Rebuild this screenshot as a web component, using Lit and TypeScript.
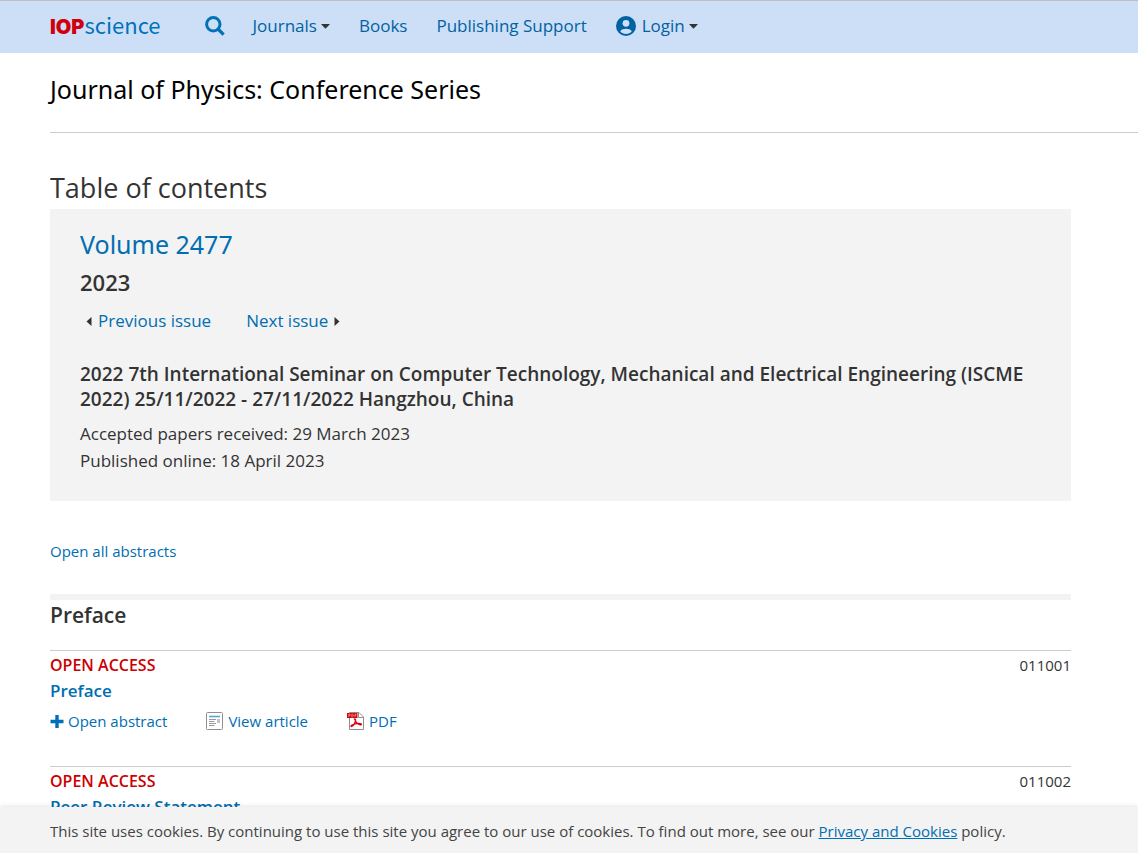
import { LitElement, html, css, svg } from "lit";
import { customElement, property } from "lit/decorators.js";

interface Article {
  title: string;
  number: string;
}

const ARTICLES: Article[] = [
  { title: "Preface", number: "011001" },
  { title: "Peer Review Statement", number: "011002" },
];

const linkStyles = css`
  a {
    color: #006eb2;
    text-decoration: none;
  }
  a:hover {
    text-decoration: underline;
  }
`;

@customElement("site-header")
export class SiteHeader extends LitElement {
  static styles = [
    linkStyles,
    css`
      :host {
        display: block;
        background: #cddff6;
        border-top: 1px solid #bfbfbf;
      }
      .bar {
        display: flex;
        align-items: center;
        height: 50px;
        padding: 0 50px 2px;
        font-size: 17px;
        line-height: 24px;
      }
      .logo {
        display: flex;
        align-items: baseline;
        margin-right: 44px;
        padding-bottom: 2px;
      }
      .logo-iop {
        color: #d0000d;
        font-family: "Inter", sans-serif;
        font-size: 20px;
        font-weight: 900;
      }
      .logo-science {
        color: #0072bc;
        font-family: "Noto Sans CJK SC", sans-serif;
        font-size: 22px;
      }
      .search {
        display: flex;
        margin-right: 28px;
      }
      .nav {
        display: flex;
        gap: 29px;
      }
      .item {
        display: flex;
        align-items: center;
        padding: 0;
        border: 0;
        background: none;
        font: inherit;
        color: #0062a3;
        white-space: nowrap;
        cursor: pointer;
      }
      a.item {
        color: #0062a3;
      }
      .caret {
        margin-left: 4px;
      }
      .user {
        margin-right: 6px;
      }
    `,
  ];

  private caret() {
    return html`<svg class="caret" width="9" height="5" viewBox="0 0 9 5" aria-hidden="true">
      <path d="M0 0h9L4.5 4.8z" fill="#333" />
    </svg>`;
  }

  render() {
    return html`
      <header class="bar">
        <a class="logo" href="#" aria-label="IOPscience home"
          ><span class="logo-iop">IOP</span><span class="logo-science">science</span></a
        >
        <a class="search" href="#" aria-label="Search">
          <svg width="20" height="20" viewBox="0 0 20 20" fill="none" stroke="#0072b5" aria-hidden="true">
            <circle cx="8.3" cy="8.3" r="6.7" stroke-width="3" />
            <path d="M13 13l5.6 5.6" stroke-width="3.2" />
          </svg>
        </a>
        <nav class="nav">
          <button class="item" type="button">Journals${this.caret()}</button>
          <a class="item" href="#">Books</a>
          <a class="item" href="#">Publishing Support</a>
          <button class="item" type="button">
            <svg class="user" width="20" height="20" viewBox="0 0 20 20" aria-hidden="true">
              <circle cx="10" cy="10" r="10" fill="#0062a3" />
              <circle cx="10" cy="7.300" r="3.400" fill="#cddff6" />
              <path d="M4.200 15.200c1.200-1.600 3.600-2.400 5.800-2.400s4.600.800 5.800 2.400c-1.300 1.700-3.400 2.700-5.800 2.700s-4.500-1-5.800-2.700z" fill="#cddff6" />
            </svg>
            Login${this.caret()}
          </button>
        </nav>
      </header>
    `;
  }
}

@customElement("issue-panel")
export class IssuePanel extends LitElement {
  static styles = [
    linkStyles,
    css`
      :host {
        display: block;
        padding: 17px 30px 27px;
        background: #f3f3f3;
      }
      h3,
      h4,
      p {
        margin: 0;
      }
      .volume {
        font-family: "Noto Sans", "Open Sans", sans-serif;
        font-size: 25px;
        font-weight: 400;
        line-height: 36px;
      }
      .year {
        margin-top: 6px;
        font-size: 22px;
        font-weight: 600;
        line-height: 28px;
      }
      .pager {
        display: flex;
        gap: 35px;
        margin-top: 12px;
        padding-left: 6px;
        font-size: 17px;
        line-height: 26px;
      }
      .pager a {
        display: flex;
        align-items: center;
        gap: 6px;
      }
      .event {
        margin: 28px 0 8px;
        font-size: 19px;
        font-weight: 600;
        line-height: 25px;
      }
      .date {
        font-size: 17px;
        line-height: 27px;
      }
    `,
  ];

  render() {
    return html`
      <h3 class="volume"><a href="#">Volume 2477</a></h3>
      <h4 class="year">2023</h4>
      <nav class="pager" aria-label="Issues">
        <a href="#">
          <svg width="6" height="9" viewBox="0 0 6 9" aria-hidden="true"><path d="M5.500 0v9L0.500 4.500z" fill="#333" /></svg>Previous issue</a
        >
        <a href="#"
          >Next issue<svg width="6" height="9" viewBox="0 0 6 9" aria-hidden="true"><path d="M0.500 0v9L5.500 4.500z" fill="#333" /></svg
        ></a>
      </nav>
      <h4 class="event">
        2022 7th International Seminar on Computer Technology, Mechanical and Electrical Engineering (ISCME 2022)
        25/11/2022 - 27/11/2022 Hangzhou, China
      </h4>
      <p class="date">Accepted papers received: 29 March 2023</p>
      <p class="date">Published online: 18 April 2023</p>
    `;
  }
}

@customElement("article-entry")
export class ArticleEntry extends LitElement {
  @property({ attribute: false }) article!: Article;

  static styles = [
    linkStyles,
    css`
      :host {
        display: block;
        padding: 1px 0 32px;
        border-top: 1px solid #ccc;
        font-size: 15px;
      }
      .top {
        display: flex;
        justify-content: space-between;
        line-height: 26px;
      }
      .access {
        color: #c00;
        font-size: 16px;
        font-weight: 600;
      }
      .title {
        margin: 0;
        font-size: 17px;
        font-weight: 600;
        line-height: 26px;
      }
      .links {
        display: flex;
        gap: 39px;
        margin-top: 4px;
        line-height: 26px;
      }
      .links a {
        display: flex;
        align-items: center;
        gap: 4px;
      }
    `,
  ];

  render() {
    const plus = svg`<path d="M7 1v13M0.500 7.500h13" stroke="#0070b8" stroke-width="3.400" fill="none" />`;
    return html`
      <div class="top">
        <span class="access">OPEN ACCESS</span>
        <span>${this.article.number}</span>
      </div>
      <h4 class="title"><a href="#">${this.article.title}</a></h4>
      <div class="links">
        <a href="#"><svg width="14" height="15" viewBox="0 0 14 15" aria-hidden="true">${plus}</svg>Open abstract</a>
        <a href="#">
          <svg width="18" height="18" viewBox="0 0 18 18" fill="none" aria-hidden="true">
            <rect x="0.500" y="0.500" width="16" height="17" rx="1" fill="#fff" stroke="#8f8f8f" />
            <path d="M3 4.500h11" stroke="#5aa6d3" stroke-width="1.600" />
            <path d="M3 7.500h7M3 9.500h5.500M3 11.500h7M3 13.500h5.500" stroke="#999" />
            <path d="M11 7h3v4h-3z" fill="#c4c4c4" />
          </svg>
          View article</a
        >
        <a href="#">
          <svg width="18" height="18" viewBox="0 0 18 18" fill="none" aria-hidden="true">
            <path d="M2.500 0.500h9.500l4.500 4.500v12.500h-14z" fill="#fff" stroke="#8f8f8f" />
            <path d="M11.500 0.500v5h5" stroke="#8f8f8f" />
            <path d="M0 1h10.500v5H0z" fill="#d3050d" />
            <path d="M1.800 5V2.200h1.300v1.300H1.800M4.800 5V2.200h.8l.7.7v1.300l-.7.600zM8 5V2.200h1.500M8 3.600h1.300" stroke="#f4b5b7" stroke-width="0.600" />
            <path d="M6.800 7.200c1.700-.7 2.200.2 1.700 1.900-.6 2-2.200 4.600-3.900 5.400-1 .3-.9-.8.300-1.400 2.500-1.300 6-1.900 8.600-1.500 1.700.5.900 1.700-.700 1.200-2.200-.7-4.200-2.700-4.900-5.300" stroke="#d3050d" stroke-width="1.200" stroke-linejoin="round" />
          </svg>
          PDF</a
        >
      </div>
    `;
  }
}

@customElement("cookie-notice")
export class CookieNotice extends LitElement {
  static styles = css`
    :host {
      display: block;
      position: relative;
      padding: 12px 50px 10px;
      background: #f3f3f3;
      box-shadow: 0 0 5px rgba(0, 0, 0, 0.15);
      color: #444;
      font-size: 15px;
      line-height: 24px;
    }
    p {
      margin: 0;
    }
    a {
      color: #006eb2;
    }
  `;

  render() {
    return html`<p>
      This site uses cookies. By continuing to use this site you agree to our use of cookies. To find out more, see our
      <a href="#">Privacy and Cookies</a> policy.
    </p>`;
  }
}

@customElement("app-root")
export class AppRoot extends LitElement {
  static styles = [
    linkStyles,
    css`
      :host {
        display: flex;
        flex-direction: column;
        height: 100vh;
        background: #fff;
        color: #333;
        font-family: "Open Sans", "Noto Sans", sans-serif;
      }
      .page {
        flex: 1;
        min-height: 0;
        overflow-y: auto;
        scrollbar-width: none;
      }
      h1,
      h2,
      h3 {
        margin: 0;
      }
      .journal {
        margin-left: 50px;
        padding: 18px 0 24px;
        border-bottom: 1px solid #ccc;
        color: #000;
        font-family: "Noto Sans", "Open Sans", sans-serif;
        font-size: 25px;
        font-weight: 400;
        line-height: 37px;
      }
      .content {
        padding: 35px 67px 0 50px;
      }
      .heading {
        padding-bottom: 1px;
        font-size: 27px;
        font-weight: 400;
        line-height: 40px;
      }
      .abstracts {
        margin: 38px 0 30px;
        font-size: 15px;
        line-height: 25px;
      }
      .section {
        padding-bottom: 20px;
        border-top: 6px solid #f3f3f3;
        font-size: 21px;
        font-weight: 600;
        line-height: 30px;
      }
    `,
  ];

  render() {
    return html`
      <div class="page">
        <site-header></site-header>
        <h1 class="journal">Journal of Physics: Conference Series</h1>
        <main class="content">
          <h2 class="heading">Table of contents</h2>
          <issue-panel></issue-panel>
          <div class="abstracts"><a href="#">Open all abstracts</a></div>
          <h3 class="section">Preface</h3>
          ${ARTICLES.map((a) => html`<article-entry .article=${a}></article-entry>`)}
        </main>
      </div>
      <cookie-notice></cookie-notice>
    `;
  }
}
